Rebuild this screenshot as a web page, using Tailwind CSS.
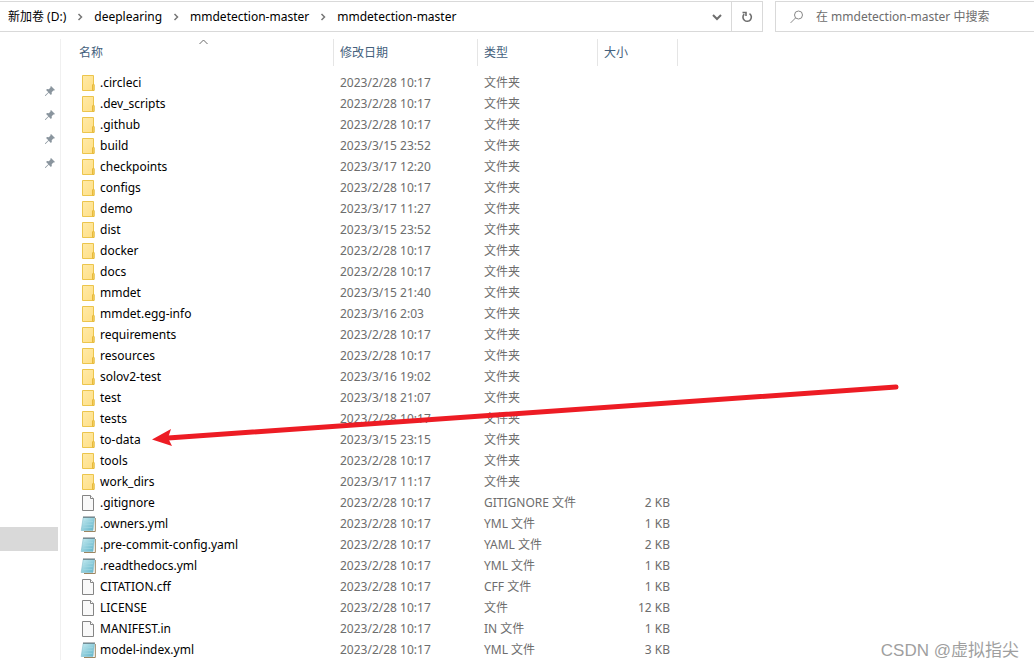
<!DOCTYPE html>
<html lang="zh-CN">
<head>
<meta charset="utf-8">
<title>mmdetection-master</title>
<script src="https://cdn.jsdelivr.net/npm/@tailwindcss/browser@4"></script>
</head>
<body class="relative min-h-screen overflow-x-hidden bg-white font-['Noto_Sans','Noto_Sans_CJK_SC',sans-serif] text-[12px] text-black">
<svg class="absolute size-0" aria-hidden="true">
  <defs>
    <linearGradient id="gold" x1="0" y1="0" x2="1" y2="1"><stop offset="0" stop-color="#ffeaa8"/><stop offset="1" stop-color="#ffdf85"/></linearGradient>
    <linearGradient id="aqua" x1="0" y1="0" x2="1" y2="1"><stop offset="0" stop-color="#c9edf2"/><stop offset="1" stop-color="#5fb3c8"/></linearGradient>
  </defs>
  <symbol id="folder" viewBox="0 0 16 16">
    <path d="M2.500.5h11v9.500h.5v5.500h-11.500z" fill="url(#gold)" stroke="#ecc54c"/>
    <path d="M12.500 15.500v-5.500l.5-.8h1v6.300z" fill="#fbdc7c" stroke="#e6b93a"/>
  </symbol>
  <symbol id="file" viewBox="0 0 16 16">
    <path d="M2.500.5h8l3 3v12h-11z" fill="#f9f9f9" stroke="#858585"/>
    <path d="M10.500.5v3h3" fill="#fff" stroke="#858585"/>
  </symbol>
  <symbol id="note" viewBox="0 0 16 16">
    <path d="M4 15.500h11.300v-13.500" fill="#fff" stroke="#9c8560"/>
    <path d="M3.200 1.500h11.300l-1.500 13h-11.800z" fill="url(#aqua)" stroke="#7fbccb" stroke-width=".6"/>
    <path d="M4 5.500h9M3.600 8.500h9M3.300 11.500h9" stroke="#a5d9e3" stroke-width=".6"/>
    <path d="M3.500 1.200h11.500" stroke="#3e4b50" stroke-width="1.800" stroke-dasharray="1 1"/>
  </symbol>
  <symbol id="pin" viewBox="0 0 10 10">
    <path d="M6 0l4 4-.9.600-.7-.1-1.700 1.700.1 1.800-.9.900-2.200-2.200-3.200 3.300-.5-.1.100-.6 3.200-3.100-2.200-2.200.9-.9 1.800.1 1.700-1.700-.1-.7z" fill="#8a959e"/>
  </symbol>
  <symbol id="crumb" viewBox="0 0 6 8"><path d="M1.500 1l3 3-3 3" fill="none" stroke="#777" stroke-width="1.500"/></symbol>
</svg>

<header class="flex gap-3 pt-px">
  <div class="flex h-[31px] w-[763px] shrink-0 border-y border-r border-[#d9d9d9]">
    <nav aria-label="路径" class="flex flex-1 items-center gap-[11px] pl-2">
      <a href="#" class="whitespace-nowrap">新加卷 (D:)</a>
      <svg class="h-2 w-[6px]"><use href="#crumb"/></svg>
      <a href="#">deeplearing</a>
      <svg class="h-2 w-[6px]"><use href="#crumb"/></svg>
      <a href="#">mmdetection-master</a>
      <svg class="h-2 w-[6px]"><use href="#crumb"/></svg>
      <a href="#">mmdetection-master</a>
    </nav>
    <button aria-label="历史记录" class="flex w-7 items-center justify-center">
      <svg class="h-2 w-[10px]" viewBox="0 0 10 8"><path d="M1 2l4 4 4-4" fill="none" stroke="#6e6e6e" stroke-width="2"/></svg>
    </button>
    <button aria-label="刷新" class="flex w-[31px] items-center justify-center border-l border-[#d9d9d9]">
      <svg class="size-3" viewBox="0 0 12 12"><path d="M8.500 2.600a4.200 4.200 0 1 1-5.300.5M1.500 1.500h3.500v3.500" fill="none" stroke="#6e6e6e" stroke-width="1.600"/></svg>
    </button>
  </div>
  <label class="flex h-[31px] min-w-0 flex-1 items-center gap-3 border-y border-l border-[#d9d9d9] pl-[14px]">
    <svg class="size-[14px] shrink-0" viewBox="0 0 14 14"><circle cx="8.500" cy="5" r="4" fill="none" stroke="#888"/><path d="M5.600 7.900l-5 5" stroke="#888"/></svg>
    <input type="search" aria-label="搜索" placeholder="在 mmdetection-master 中搜索" class="min-w-0 flex-1 outline-none placeholder:text-[#6d6d6d]">
  </label>
</header>

<div class="flex pt-[7px]">
  <aside class="flex w-[61px] shrink-0 flex-col border-r border-[#f0f0f0]">
    <ul class="flex flex-col gap-[14px] pt-[47px] pl-[45px]">
      <li><svg class="size-[10px]"><use href="#pin"/></svg></li>
      <li><svg class="size-[10px]"><use href="#pin"/></svg></li>
      <li><svg class="size-[10px]"><use href="#pin"/></svg></li>
      <li><svg class="size-[10px]"><use href="#pin"/></svg></li>
    </ul>
    <div class="mt-[359px] mr-[2px] h-6 bg-[#d9d9d9]"></div>
  </aside>
  <main class="min-w-0 flex-1">
    <table class="w-[617px] table-fixed border-separate border-spacing-0">
      <colgroup><col class="w-[273px]"><col class="w-[144px]"><col class="w-[120px]"><col class="w-[80px]"></colgroup>
      <thead>
        <tr class="h-[27px] text-left text-[#44607c]">
          <th class="relative border-r border-[#e5e5e5] pl-[18px] font-normal">名称
            <svg class="absolute top-0 left-[138px] h-[6px] w-[9px]" viewBox="0 0 9 6"><path d="M.5 5l4-4 4 4" fill="none" stroke="#6a6a6a"/></svg>
          </th>
          <th class="border-r border-[#e5e5e5] pl-[6px] font-normal">修改日期</th>
          <th class="border-r border-[#e5e5e5] pl-[6px] font-normal">类型</th>
          <th class="border-r border-[#e5e5e5] pl-[6px] font-normal">大小</th>
        </tr>
        <tr class="h-[6px]"><td colspan="4"></td></tr>
      </thead>
      <tbody id="rows"></tbody>
    </table>
  </main>
</div>

<svg class="pointer-events-none absolute top-0 left-0 h-[669px] w-[1034px]" viewBox="0 0 1034 669" aria-hidden="true">
  <path d="M896 387L168 438" stroke="#ed1c24" stroke-width="5" stroke-linecap="round"/>
  <path d="M152 439.500L171 429l-3 9 4 8z" fill="#ed1c24"/>
</svg>
<p class="absolute right-[15px] bottom-[6px] text-[17px] leading-6 text-[#9f9f9f] font-['Liberation_Sans','Noto_Sans_CJK_SC',sans-serif]">CSDN @虚拟指尖</p>

<script>
const entries = [
  ['folder', '.circleci', '2023/2/28 10:17', '文件夹', ''],
  ['folder', '.dev_scripts', '2023/2/28 10:17', '文件夹', ''],
  ['folder', '.github', '2023/2/28 10:17', '文件夹', ''],
  ['folder', 'build', '2023/3/15 23:52', '文件夹', ''],
  ['folder', 'checkpoints', '2023/3/17 12:20', '文件夹', ''],
  ['folder', 'configs', '2023/2/28 10:17', '文件夹', ''],
  ['folder', 'demo', '2023/3/17 11:27', '文件夹', ''],
  ['folder', 'dist', '2023/3/15 23:52', '文件夹', ''],
  ['folder', 'docker', '2023/2/28 10:17', '文件夹', ''],
  ['folder', 'docs', '2023/2/28 10:17', '文件夹', ''],
  ['folder', 'mmdet', '2023/3/15 21:40', '文件夹', ''],
  ['folder', 'mmdet.egg-info', '2023/3/16 2:03', '文件夹', ''],
  ['folder', 'requirements', '2023/2/28 10:17', '文件夹', ''],
  ['folder', 'resources', '2023/2/28 10:17', '文件夹', ''],
  ['folder', 'solov2-test', '2023/3/16 19:02', '文件夹', ''],
  ['folder', 'test', '2023/3/18 21:07', '文件夹', ''],
  ['folder', 'tests', '2023/2/28 10:17', '文件夹', ''],
  ['folder', 'to-data', '2023/3/15 23:15', '文件夹', ''],
  ['folder', 'tools', '2023/2/28 10:17', '文件夹', ''],
  ['folder', 'work_dirs', '2023/3/17 11:17', '文件夹', ''],
  ['file', '.gitignore', '2023/2/28 10:17', 'GITIGNORE 文件', '2 KB'],
  ['note', '.owners.yml', '2023/2/28 10:17', 'YML 文件', '1 KB'],
  ['note', '.pre-commit-config.yaml', '2023/2/28 10:17', 'YAML 文件', '2 KB'],
  ['note', '.readthedocs.yml', '2023/2/28 10:17', 'YML 文件', '1 KB'],
  ['file', 'CITATION.cff', '2023/2/28 10:17', 'CFF 文件', '1 KB'],
  ['file', 'LICENSE', '2023/2/28 10:17', '文件', '12 KB'],
  ['file', 'MANIFEST.in', '2023/2/28 10:17', 'IN 文件', '1 KB'],
  ['note', 'model-index.yml', '2023/2/28 10:17', 'YML 文件', '3 KB']
];
document.getElementById('rows').innerHTML = entries.map(([icon, name, date, type, size]) => `
  <tr class="h-[21px] leading-5 text-[#6d6d6d]">
    <td class="pl-[19px] text-black"><div class="flex items-center gap-1"><svg class="size-4 shrink-0"><use href="#${icon}"/></svg><span>${name}</span></div></td>
    <td class="pl-[6px]">${date}</td>
    <td class="pl-[6px]">${type}</td>
    <td class="pr-2 text-right">${size}</td>
  </tr>`).join('');
</script>
</body>
</html>
